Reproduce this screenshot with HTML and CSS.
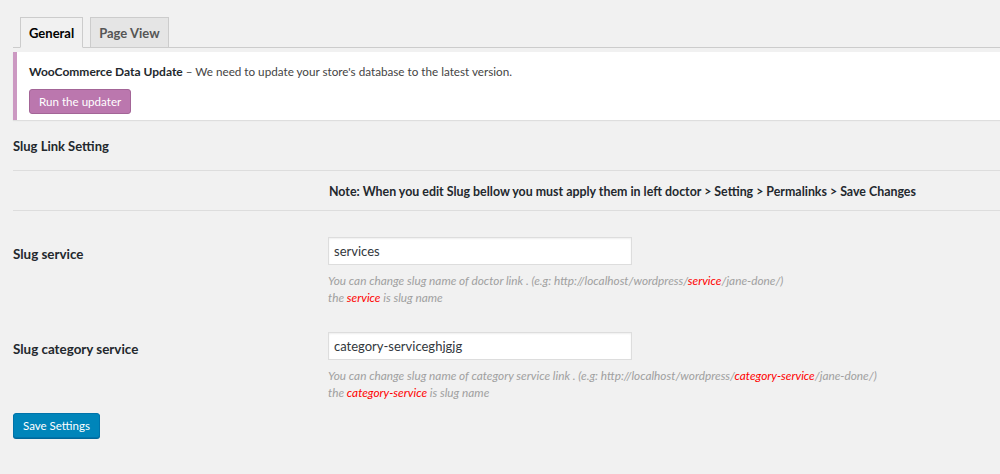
FILE: index.html
```html
<!DOCTYPE html>
<html>
<head>
<meta charset="utf-8">
<link rel="stylesheet" href="styles.css">
</head>
<body>
<div class="wrap">
  <nav class="tabs">
    <span class="tab active">General</span>
    <span class="tab">Page View</span>
  </nav>
  <div class="notice">
    <p><strong>WooCommerce Data Update</strong> – We need to update your store's database to the latest version.</p>
    <span class="btn-purple">Run the updater</span>
  </div>
  <h3 class="section-title">Slug Link Setting</h3>
  <div class="note-row">
    <div class="col-label"></div>
    <div class="note">Note: When you edit Slug bellow you must apply them in left doctor &gt; Setting &gt; Permalinks &gt; Save Changes</div>
  </div>
  <div class="field-row first">
    <div class="col-label label">Slug service</div>
    <div class="col-field">
      <div class="input">services</div>
      <p class="desc">You can change slug name of doctor link . (e.g: http://localhost/wordpress/<span class="red">service</span>/jane-done/)<br>the <span class="red">service</span> is slug name</p>
    </div>
  </div>
  <div class="field-row">
    <div class="col-label label">Slug category service</div>
    <div class="col-field">
      <div class="input">category-serviceghjgjg</div>
      <p class="desc">You can change slug name of category service link . (e.g: http://localhost/wordpress/<span class="red">category-service</span>/jane-done/)<br>the <span class="red">category-service</span> is slug name</p>
    </div>
  </div>
  <span class="btn-blue">Save Settings</span>
</div>
</body>
</html>
```
FILE: styles.css
```css
* { box-sizing: border-box; }
html, body { margin: 0; padding: 0; }
body {
  background: #f1f1f1;
  font-family: Lato, "Open Sans", sans-serif;
  font-size: 12px;
  color: #444;
  width: 1000px;
  height: 474px;
  overflow: hidden;
}
.wrap { padding: 17px 0 0 13px; }

.tabs {
  display: flex;
  gap: 7px;
  padding-left: 7px;
  border-bottom: 1px solid #ccc;
  height: 31px;
}
.tab {
  display: flex;
  align-items: center;
  padding: 0 8px;
  height: 31px;
  border: 1px solid #ccc;
  background: #e5e5e5;
  color: #555;
  font-weight: 700;
  font-size: 13px;
}
.tab.active {
  background: #f1f1f1;
  color: #000;
  border-bottom-color: #f1f1f1;
}

.notice {
  margin-top: 4px;
  background: #fff;
  border-left: 4px solid #cc99c2;
  box-shadow: 0 1px 1px rgba(0,0,0,.08);
  padding: 10px 12px 8px 12px;
  height: 68px;
}
.notice p { margin: 0 0 8px; color: #444; line-height: 18px; font-size: 11.7px; }
.notice strong { color: #23282d; font-size: 12px; }
.btn-purple {
  display: inline-flex;
  align-items: center;
  height: 25px;
  padding: 0 9px;
  background: #bb77ae;
  border: 1px solid #a36597;
  border-radius: 3px;
  color: #fff;
  font-size: 11.6px;
}

.section-title {
  margin: 0;
  padding: 17px 0 15px;
  font-size: 13px;
  color: #23282d;
  border-bottom: 1px solid #ddd;
  line-height: 18px;
}
.note-row {
  display: grid;
  grid-template-columns: 315px 1fr;
  border-bottom: 1px solid #ddd;
  padding: 12px 0 9px;
  line-height: 18px;
}
.note { font-weight: 700; color: #23282d; padding-left: 1px; font-size: 12.4px; }

.field-row {
  display: grid;
  grid-template-columns: 315px 1fr;
}
.field-row.first { padding-top: 26px; }
.field-row + .field-row { padding-top: 26px; }
.label {
  font-weight: 700;
  color: #23282d;
  padding-top: 8px;
  line-height: 18px;
  font-size: 13.4px;
}
.input {
  width: 304px;
  height: 28px;
  background: #fff;
  border: 1px solid #ddd;
  box-shadow: inset 0 1px 2px rgba(0,0,0,.07);
  padding: 0 5px;
  display: flex;
  align-items: center;
  color: #32373c;
  font-size: 13px;
}
.desc {
  margin: 8px 0 0;
  font-style: italic;
  color: #a0a0a0;
  line-height: 16.5px;
  font-size: 11.8px;
}
.red { color: #f00; }

.btn-blue {
  display: inline-flex;
  align-items: center;
  margin-top: 12px;
  height: 25px;
  padding: 0 9px;
  background: #0085ba;
  border: 1px solid #0073aa;
  border-radius: 3px;
  box-shadow: 0 1px 0 #006799;
  color: #fff;
  font-size: 11.5px;
}
```
